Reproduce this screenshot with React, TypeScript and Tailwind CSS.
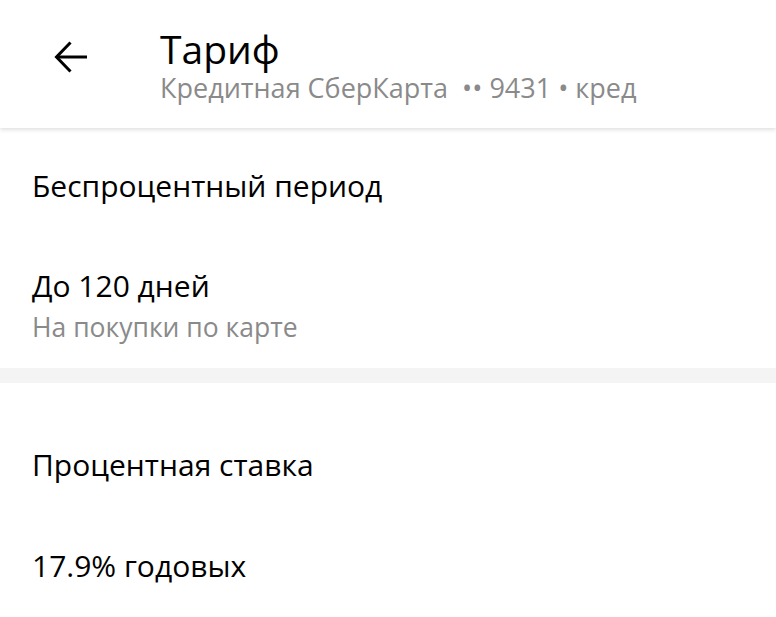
import React from "react";

function BackArrow() {
  return (
    <svg width="34" height="32" viewBox="0 0 34 32" fill="none" stroke="#000" strokeWidth="3" strokeLinecap="butt" strokeLinejoin="miter">
      <path d="M33 16H3" />
      <path d="M16.5 1.5L2.5 16l14 14.5" />
    </svg>
  );
}

export default function App() {
  return (
    <div className="w-[776px] h-[617px] overflow-hidden bg-white" style={{ fontFamily: '"Open Sans", "Noto Sans", sans-serif' }}>
      <header className="relative flex h-[128px] items-start bg-white shadow-[0_2px_4px_rgba(0,0,0,0.12)]">
        <div className="flex w-[160px] pl-[54px] pt-[41px]">
          <BackArrow />
        </div>
        <div className="flex flex-col pt-[25px]">
          <div className="text-[39px] leading-[48px] text-black">Тариф</div>
          <div className="text-[27px] leading-[30px] text-[#8a8a8a]">Кредитная СберКарта &nbsp;•• 9431 • кред</div>
        </div>
      </header>
      <section className="px-[32px]">
        <div className="pt-[40px] text-[30px] leading-[36px] text-black">Беспроцентный период</div>
        <div className="pt-[64px] text-[30px] leading-[36px] text-black">До 120 дней</div>
        <div className="pt-[8px] text-[26.5px] leading-[30px] text-[#8a8a8a]">На покупки по карте</div>
      </section>
      <div className="mt-[26px] h-[15px] bg-[#f4f4f4]" />
      <section className="px-[32px]">
        <div className="pt-[64px] text-[30px] leading-[36px] text-black">Процентная ставка</div>
        <div className="pt-[65px] text-[30px] leading-[36px] text-black">17.9% годовых</div>
      </section>
    </div>
  );
}
